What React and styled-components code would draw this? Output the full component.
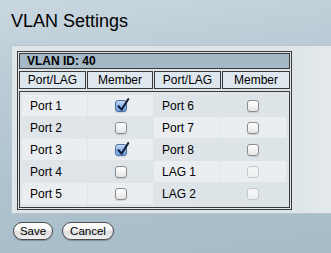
import styled, { createGlobalStyle, css } from "styled-components";

const GlobalStyle = createGlobalStyle`
  html, body {
    margin: 0;
    padding: 0;
  }
  body {
    width: 331px;
    height: 253px;
    overflow: hidden;
    font-family: "Liberation Sans", Arial, sans-serif;
    background: linear-gradient(172deg, #c9d7df 0%, #bccdd7 25%, #afc3cf 60%, #a6bcc9 100%);
  }
`;

const ports = [
  { name: "Port 1", checked: true },
  { name: "Port 2" },
  { name: "Port 3", checked: true },
  { name: "Port 4" },
  { name: "Port 5" },
  { name: "Port 6" },
  { name: "Port 7" },
  { name: "Port 8" },
  { name: "LAG 1", disabled: true },
  { name: "LAG 2", disabled: true },
];

const Checkbox = ({ checked, disabled }) => (
  <Box $checked={checked} $disabled={disabled}>
    {checked && (
      <Tick viewBox="0 0 16 16" width="16" height="16">
        <path d="M3.5 8.2 L6.6 11.6 L13.2 1.2" fill="none" stroke="#14203d" strokeWidth="2.1" strokeLinecap="round" strokeLinejoin="round" />
      </Tick>
    )}
  </Box>
);

const PortCells = ({ port, index }) => (
  <>
    <Cell $light={index % 2 === 0}>{port.name}</Cell>
    <Cell $light={index % 2 === 0} $center>
      <Checkbox checked={port.checked} disabled={port.disabled} />
    </Cell>
  </>
);

const App = () => {
  const rows = [0, 1, 2, 3, 4];

  return (
    <Page>
      <GlobalStyle />
      <Title>VLAN Settings</Title>
      <Panel>
        <Table>
          <VlanHeader>VLAN ID: 40</VlanHeader>
          <HeadRow>
            <HeadCell>Port/LAG</HeadCell>
            <HeadCell>Member</HeadCell>
            <HeadCell>Port/LAG</HeadCell>
            <HeadCell>Member</HeadCell>
          </HeadRow>
          <Body>
            {rows.map((i) => (
              <Row key={i}>
                <PortCells port={ports[i]} index={i} />
                <PortCells port={ports[i + 5]} index={i + 5} />
              </Row>
            ))}
          </Body>
        </Table>
      </Panel>
      <Buttons>
        <Button $w={40}>Save</Button>
        <Button $w={52}>Cancel</Button>
      </Buttons>
    </Page>
  );
};

export default App;

const Page = styled.div`
  padding-left: 11px;
  display: flex;
  flex-direction: column;
`;

const Title = styled.h1`
  margin: 11px 0 13px 0;
  font-size: 18px;
  line-height: 21px;
  font-weight: normal;
  color: #000;
`;

const Panel = styled.div`
  background: linear-gradient(90deg, #dfe5e9 0%, #dde4e8 85%, #e3e9ec 100%);
  border: 1px solid #b9c6ce;
  border-right: none;
  padding: 5px 0 3px 5px;
`;

const Table = styled.div`
  width: 271px;
  border: 1px solid #3a3a3a;
  padding: 1px;
  display: flex;
  flex-direction: column;
  gap: 2px;
`;

const VlanHeader = styled.div`
  height: 14px;
  border: 1px solid #3a3a3a;
  background: #a5b8c6;
  padding-left: 7px;
  font-size: 12px;
  font-weight: bold;
  line-height: 14px;
`;

const HeadRow = styled.div`
  display: grid;
  grid-template-columns: 67px 66px 67px 68px;
  column-gap: 1px;
`;

const HeadCell = styled.div`
  box-sizing: border-box;
  height: 18px;
  border: 1px solid #3a3a3a;
  background: #dfe7ee;
  font-size: 12px;
  line-height: 16px;
  text-align: center;
`;

const Body = styled.div`
  border: 1px solid #3a3a3a;
  padding: 3px 3px 3px 2px;
  display: flex;
  flex-direction: column;
  gap: 1px;
`;

const Row = styled.div`
  display: grid;
  grid-template-columns: 65px 65px 65px 66px;
  column-gap: 1px;
  height: 21px;
`;

const Cell = styled.div`
  display: flex;
  align-items: center;
  justify-content: ${(p) => (p.$center ? "center" : "flex-start")};
  padding-left: ${(p) => (p.$center ? "0" : "8px")};
  background: ${(p) => (p.$light ? "#eaeef1" : "transparent")};
  font-size: 12px;
  color: #000;
`;

const Box = styled.span`
  position: relative;
  display: inline-block;
  width: 10px;
  height: 10px;
  border-radius: 3px;
  border: 1px solid #8c8c8c;
  background: linear-gradient(#ffffff 0%, #f3f3f3 50%, #e4e4e4 100%);
  box-shadow: 0 1px 1px rgba(0, 0, 0, 0.12);

  ${(p) =>
    p.$checked &&
    css`
      border-color: #4e6f9e;
      background: linear-gradient(#c6dbf6 0%, #8fb6ea 50%, #6c9fe3 100%);
    `}

  ${(p) =>
    p.$disabled &&
    css`
      border-color: #c4c8cb;
      background: linear-gradient(#f6f7f8 0%, #eceff1 100%);
      box-shadow: none;
    `}
`;

const Tick = styled.svg`
  position: absolute;
  left: -1px;
  top: -3px;
  overflow: visible;
`;

const Buttons = styled.div`
  display: flex;
  gap: 9px;
  margin: 8px 0 0 2px;
`;

const Button = styled.button`
  width: ${(p) => p.$w}px;
  height: 18px;
  padding: 0;
  border: 1px solid #4d4d4d;
  border-radius: 9px;
  background: linear-gradient(#ffffff 0%, #f4f4f4 45%, #dcdcdc 55%, #f2f2f2 100%);
  box-shadow: 0 1px 1px rgba(0, 0, 0, 0.25);
  font-family: "Liberation Sans", Arial, sans-serif;
  font-size: 11.5px;
  line-height: 16px;
  color: #000;
`;
